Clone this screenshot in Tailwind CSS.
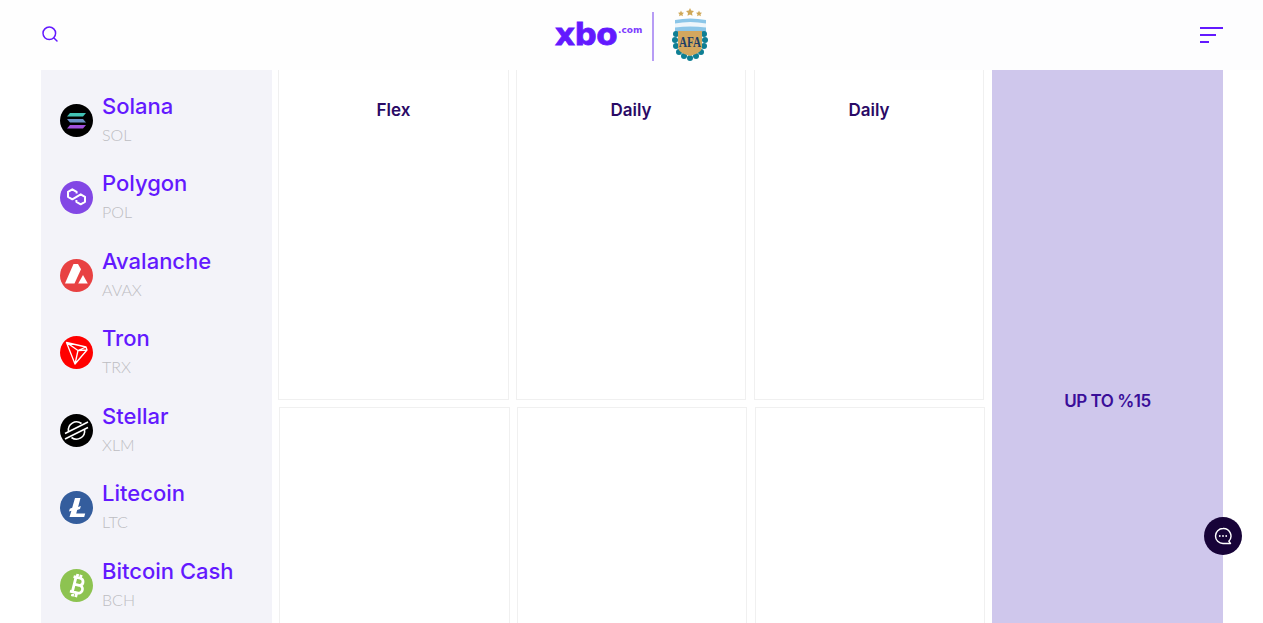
<!doctype html>
<html lang="en">
<head>
<meta charset="utf-8">
<title>XBO</title>
<script src="https://cdn.jsdelivr.net/npm/@tailwindcss/browser@4"></script>
</head>
<body class="bg-white overflow-hidden font-['Inter',sans-serif]">
<div class="relative h-[623px] w-[1263px] overflow-hidden">
  <header class="h-[70px] flex items-center justify-between pl-[41px] pr-[40px] bg-[#fefefe] relative">
    <div class="absolute left-[890px] right-0 top-0 h-[70px] bg-[#fdfdfe]"></div>
    <svg class="w-[18px] h-[18px] -mt-[2px]" viewBox="0 0 18 18" fill="none" stroke="#6319ff" stroke-width="1.500" stroke-linecap="round"><circle cx="8.300" cy="8.300" r="6.300"/><path d="M13 13l3 3"/></svg>
    <div class="absolute left-[555px] top-[8px] flex items-start">
      <div class="relative w-[88px] h-[54px]">
        <span class="absolute left-0 top-[8px] font-['DejaVu_Sans'] text-[31px] leading-[36px] font-bold tracking-[-0.5px] [-webkit-text-stroke:0.8px_#6319ff] text-[#6319ff]">xbo</span>
        <span class="absolute left-[63px] top-[16px] font-['DejaVu_Sans'] text-[9px] leading-[12px] font-bold text-[#7d3cff]">.com</span>
      </div>
      <div class="w-[2px] h-[49px] mt-[4px] ml-[9px] bg-[#b79cf5]"></div>
      <svg class="w-[38px] h-[54px] ml-[17px]" viewBox="0 0 38 54">
        <path d="M10 2.500l.9 1.900 2.100.3-1.500 1.500.4 2.100-1.900-1-1.900 1 .4-2.100L7 4.700l2.100-.3z" fill="#cfa858"/>
        <path d="M19 0l1.200 2.600 2.800.4-2 2 .5 2.800L19 6.500l-2.500 1.300.5-2.800-2-2 2.800-.4z" fill="#cfa858"/>
        <path d="M28 2.500l.9 1.900 2.100.3-1.500 1.500.4 2.100-1.900-1-1.900 1 .4-2.100-1.500-1.500 2.100-.3z" fill="#cfa858"/>
        <path d="M4 12q15-3 31 0v12H4z" fill="#8cc6e8"/>
        <path d="M4 15.500q15-3 31 0v4q-16-2-31 0z" fill="#eef6fb"/>
        <circle cx="5" cy="26" r="3" fill="#0f7f94"/><circle cx="4" cy="32" r="3" fill="#0f7f94"/><circle cx="5" cy="38" r="3" fill="#0f7f94"/><circle cx="8" cy="44" r="3" fill="#0f7f94"/><circle cx="13" cy="48" r="3" fill="#0f7f94"/><circle cx="19" cy="50" r="3" fill="#0f7f94"/><circle cx="25" cy="48" r="3" fill="#0f7f94"/><circle cx="30" cy="44" r="3" fill="#0f7f94"/><circle cx="33" cy="38" r="3" fill="#0f7f94"/><circle cx="34" cy="32" r="3" fill="#0f7f94"/><circle cx="33" cy="26" r="3" fill="#0f7f94"/>
        <path d="M7 23h24v16q0 6-12 9Q7 45 7 39z" fill="#d3a75e"/>
        <text x="19" y="39" text-anchor="middle" font-family="Liberation Serif" font-weight="700" font-size="15" textLength="22" lengthAdjust="spacingAndGlyphs" fill="#1d3f66">AFA</text>
      </svg>
    </div>
    <div class="flex flex-col gap-[5px] w-[23px] -mt-[1px] relative">
      <div class="h-[2px] w-[23px] bg-[#6319ff]"></div>
      <div class="h-[2px] w-[16px] bg-[#6319ff]"></div>
      <div class="h-[2px] w-[9px] bg-[#6319ff]"></div>
    </div>
  </header>

  <main class="flex items-start h-[553px] pl-[41px]">
    <aside class="w-[231px] h-[553px] bg-[#f3f3f9] pt-[16.300px] pl-[19px] flex flex-col gap-[9.500px]">
      <div class="flex items-center gap-[9px] h-[68px]">
        <svg class="w-[33px] h-[33px]" viewBox="0 0 33 33"><circle cx="16.500" cy="16.500" r="16.500" fill="#000"/><path d="M10 9h16l-3 3.500H7z" fill="#42c3b5"/><path d="M7 15h16l3 3.500H10z" fill="#6a8fc7"/><path d="M10 21h16l-3 3.500H7z" fill="#a04fdc"/></svg>
        <div class="mb-[5px]"><div class="text-[22px] leading-[30px] font-medium text-[#6319ff]">Solana</div><div class="mt-[4px] font-['Lato'] font-light text-[16px] leading-[20px] text-[#bdbdc2]">SOL</div></div>
      </div>
      <div class="flex items-center gap-[9px] h-[68px]">
        <svg class="w-[33px] h-[33px]" viewBox="0 0 33 33"><circle cx="16.500" cy="16.500" r="16.500" fill="#8247e5"/><path d="M16.600 12.500V10.800L12.300 8.300 8 10.800v5l4.300 2.500 8.400-5 4.300 2.500v5l-4.300 2.500-4.300-2.500v-1.700" fill="none" stroke="#fff" stroke-width="2" stroke-linejoin="round"/></svg>
        <div class="mb-[5px]"><div class="text-[22px] leading-[30px] font-medium text-[#6319ff]">Polygon</div><div class="mt-[4px] font-['Lato'] font-light text-[16px] leading-[20px] text-[#bdbdc2]">POL</div></div>
      </div>
      <div class="flex items-center gap-[9px] h-[68px]">
        <svg class="w-[33px] h-[33px]" viewBox="0 0 33 33"><circle cx="16.500" cy="16.500" r="16.500" fill="#e84142"/><path d="M13.500 5h4.500l3 5.200L14.500 24.500H5z" fill="#fff"/><path d="M23 16l4.800 8.500h-9.600z" fill="#fff"/></svg>
        <div class="mb-[5px]"><div class="text-[22px] leading-[30px] font-medium text-[#6319ff]">Avalanche</div><div class="mt-[4px] font-['Lato'] font-light text-[16px] leading-[20px] text-[#bdbdc2]">AVAX</div></div>
      </div>
      <div class="flex items-center gap-[9px] h-[68px]">
        <svg class="w-[33px] h-[33px]" viewBox="0 0 33 33"><circle cx="16.500" cy="16.500" r="16.500" fill="#ff0000"/><path d="M6.500 6.500l19.500 4.500 1 3L15 28zM6.500 6.500L15 28M6.500 6.500l11.500 8 9-.5M18 14.500L15 28M18 14.500l8-3.500" fill="none" stroke="#fff" stroke-width="1.300" stroke-linejoin="round"/></svg>
        <div class="mb-[5px]"><div class="text-[22px] leading-[30px] font-medium text-[#6319ff]">Tron</div><div class="mt-[4px] font-['Lato'] font-light text-[16px] leading-[20px] text-[#bdbdc2]">TRX</div></div>
      </div>
      <div class="flex items-center gap-[9px] h-[68px]">
        <svg class="w-[33px] h-[33px]" viewBox="0 0 33 33"><circle cx="16.500" cy="16.500" r="16.500" fill="#000"/><path d="M5 19.500L28 8M5 25L28 13.500" stroke="#fff" stroke-width="1.600" fill="none"/><path d="M8.500 17.500a8.200 8.200 0 0 1 13-8M24.500 15.500a8.200 8.200 0 0 1-13 8" stroke="#fff" stroke-width="1.600" fill="none"/></svg>
        <div class="mb-[5px]"><div class="text-[22px] leading-[30px] font-medium text-[#6319ff]">Stellar</div><div class="mt-[4px] font-['Lato'] font-light text-[16px] leading-[20px] text-[#bdbdc2]">XLM</div></div>
      </div>
      <div class="flex items-center gap-[9px] h-[68px]">
        <svg class="w-[33px] h-[33px]" viewBox="0 0 33 33"><circle cx="16.500" cy="16.500" r="16.500" fill="#345d9d"/><path d="M15 7h5.500l-2.400 9 2.800-1-.9 3-2.800 1-1 3.500h9l-1 3.500H9.500l1.900-6.300-2.400.9.800-2.900 2.400-.9z" fill="#fff"/></svg>
        <div class="mb-[5px]"><div class="text-[22px] leading-[30px] font-medium text-[#6319ff]">Litecoin</div><div class="mt-[4px] font-['Lato'] font-light text-[16px] leading-[20px] text-[#bdbdc2]">LTC</div></div>
      </div>
      <div class="flex items-center gap-[9px] h-[68px]">
        <svg class="w-[33px] h-[33px]" viewBox="0 0 33 33"><circle cx="16.500" cy="16.500" r="16.500" fill="#8dc351"/><g transform="rotate(14 16.500 16.500)"><path d="M11.500 8.500h7a3.700 3.700 0 0 1 1.500 7 4 4 0 0 1-1.500 8h-7M14 8.500v15M14 15.800h5M15 5v3.500M18.500 5v3.500M15 23.500V28M18.500 23.500V28" fill="none" stroke="#fff" stroke-width="2.800"/></g></svg>
        <div class="mb-[5px]"><div class="text-[22px] leading-[30px] font-medium text-[#6319ff]">Bitcoin Cash</div><div class="mt-[4px] font-['Lato'] font-light text-[16px] leading-[20px] text-[#bdbdc2]">BCH</div></div>
      </div>
    </aside>

    <section class="w-[707px] ml-[6px] flex flex-col gap-[7px]">
      <div class="flex h-[330px]">
        <div class="w-[231px] border border-t-0 border-[#f0f0f0] pt-[27px] text-center text-[17px] leading-[26px] font-semibold text-[#2a0a66]">Flex</div>
        <div class="w-[230px] ml-[7px] border border-t-0 border-[#f0f0f0] pt-[27px] text-center text-[17px] leading-[26px] font-semibold text-[#2a0a66]">Daily</div>
        <div class="w-[230px] ml-[8px] border border-t-0 border-[#f0f0f0] pt-[27px] text-center text-[17px] leading-[26px] font-semibold text-[#2a0a66]">Daily</div>
      </div>
      <div class="flex h-[240px] pl-px">
        <div class="w-[231px] border border-[#f0f0f0]"></div>
        <div class="w-[230px] ml-[7px] border border-[#f0f0f0]"></div>
        <div class="w-[230px] ml-[8px] border border-[#f0f0f0]"></div>
      </div>
    </section>

    <div class="w-[231px] h-[553px] ml-[7px] bg-[#cfc7ec] flex items-center justify-center pt-[110px] text-[17px] font-semibold tracking-[-0.5px] text-[#3a0e99]">UP TO %15</div>
  </main>

  <button class="absolute left-[1204px] top-[517px] w-[38px] h-[38px] rounded-full bg-[#170338] flex items-center justify-center">
    <svg class="w-[18px] h-[18px]" viewBox="0 0 18 18" fill="none"><path d="M9 1.500a7.500 7.500 0 1 0 0 15h7.500l-1.700-2.300A7.500 7.500 0 0 0 9 1.500z" stroke="#fff" stroke-width="1.400" stroke-linejoin="round"/><circle cx="5.800" cy="9" r=".9" fill="#fff"/><circle cx="9" cy="9" r=".9" fill="#fff"/><circle cx="12.200" cy="9" r=".9" fill="#fff"/></svg>
  </button>
</div>
</body>
</html>
